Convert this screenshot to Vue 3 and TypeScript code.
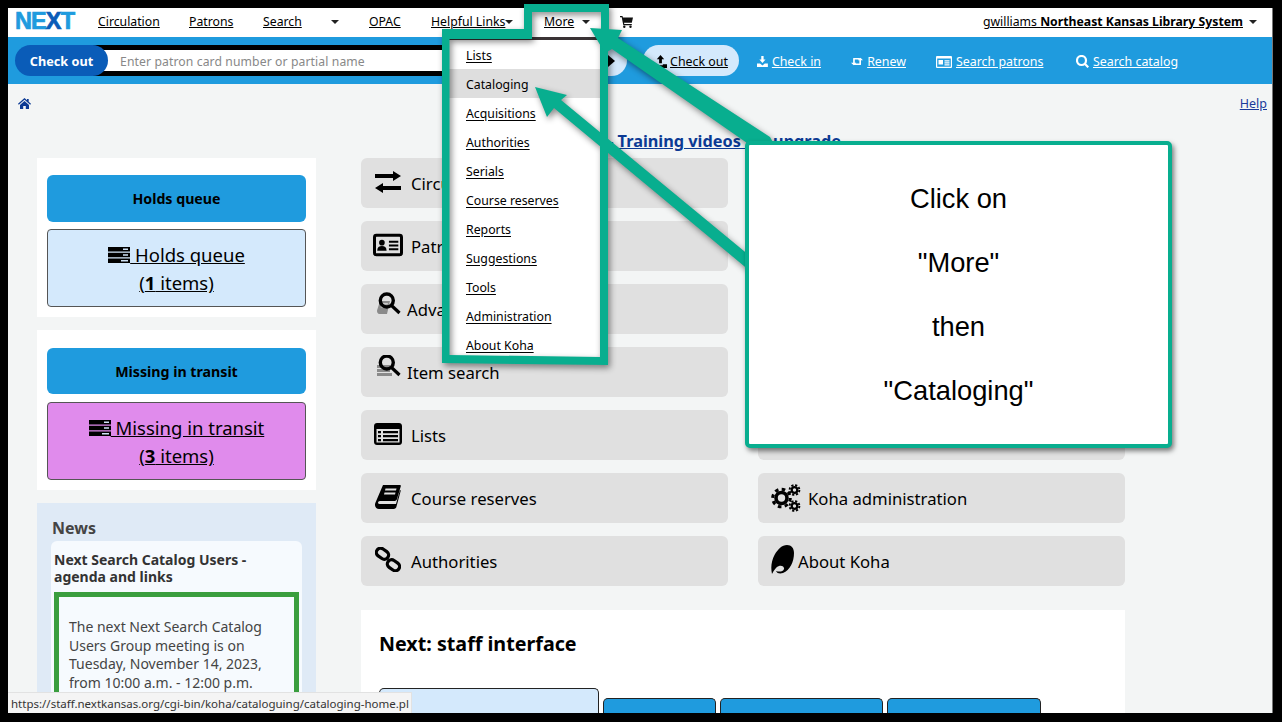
<script setup lang="ts">
const navLinks = [
  { label: 'Circulation', width: 61 },
  { label: 'Patrons', width: 44 },
  { label: 'Search', width: 39 },
]
const menuItems = ['Lists', 'Cataloging', 'Acquisitions', 'Authorities', 'Serials', 'Course reserves', 'Reports', 'Suggestions', 'Tools', 'Administration', 'About Koha']
const tools = [
  { label: 'Check in', icon: 'i-download', w: 64, iw: 13, ih: 13, gap: 30 },
  { label: 'Renew', icon: 'i-retweet', w: 55, iw: 15, ih: 11, gap: 30 },
  { label: 'Search patrons', icon: 'i-idcard', w: 108, iw: 16, ih: 12, gap: 32 },
  { label: 'Search catalog', icon: 'i-search', w: 104, iw: 13, ih: 13, gap: 0 },
]
const leftTiles = [
  { label: 'Circulation', icon: 'i-exchange', w: 28, h: 22 },
  { label: 'Patrons', icon: 'i-card', w: 32, h: 24 },
  { label: 'Advanced search', icon: 'i-advsearch', w: 24, h: 24, tight: true },
  { label: 'Item search', icon: 'i-itemsearch', w: 24, h: 24, tight: true },
  { label: 'Lists', icon: 'i-lists', w: 28, h: 22 },
  { label: 'Course reserves', icon: 'i-book', w: 26, h: 24 },
  { label: 'Authorities', icon: 'i-link', w: 26, h: 25 },
]
const panels = [
  { head: 'Holds queue', cls: 'blue', count: 1 },
  { head: 'Missing in transit', cls: 'pink', count: 3 },
]
const tabs = [
  { w: 220, active: true },
  { w: 113, active: false },
  { w: 163, active: false },
  { w: 154, active: false },
]
const calloutLines = ['Click on', '"More"', 'then', '"Cataloging"']
</script>

<template>
  <div class="frame">
    <svg class="defs" width="0" height="0" aria-hidden="true">
      <symbol id="i-exchange" viewBox="0 0 28 22"><path d="M1 3h18V0l8 5-8 5V7H1zM27 15H9v-3l-8 5 8 5v-3h18z" /></symbol>
      <symbol id="i-card" viewBox="0 0 32 24">
        <rect x="1.600" y="1.600" width="28.800" height="20.800" rx="2" fill="none" stroke="currentColor" stroke-width="3.200" />
        <circle cx="9.500" cy="9.500" r="3" /><path d="M4.500 18c0-3.500 2-5 5-5s5 1.500 5 5zM17 7.500h10v2H17zM17 11.500h10v2H17zM17 15.500h10v2H17z" />
      </symbol>
      <symbol id="i-advsearch" viewBox="0 0 24 24">
        <path d="M3 9h10l-3 13H2.500C0 22-.5 19 .5 17z" fill="#8a8a8a" />
        <path d="M5 11h6l-.4 1.500H4.600zM4 14h6l-.4 1.500H3.600z" fill="#c9c9c9" />
        <circle cx="9.800" cy="8.500" r="6.500" fill="none" stroke="currentColor" stroke-width="3.400" />
        <path d="M14.500 13.500l8 7.500" fill="none" stroke="currentColor" stroke-width="3.200" />
      </symbol>
      <symbol id="i-itemsearch" viewBox="0 0 24 24">
        <path d="M0 10h13v3H0zM0 14h13v3H0zM0 18h15v3H0z" fill="#8a8a8a" />
        <circle cx="9.800" cy="7.500" r="6.500" fill="none" stroke="currentColor" stroke-width="3.400" />
        <path d="M14.500 12.500l8 7.500" fill="none" stroke="currentColor" stroke-width="3.200" />
      </symbol>
      <symbol id="i-lists" viewBox="0 0 28 22">
        <path fill-rule="evenodd" d="M3 0h22c1.700 0 3 1.300 3 3v16c0 1.700-1.300 3-3 3H3c-1.700 0-3-1.300-3-3V3c0-1.700 1.300-3 3-3zM2.500 6v13.500h23V6z" />
        <path d="M4 8h3v2.200H4zM9 8h15v2.200H9zM4 12h3v2.200H4zM9 12h15v2.200H9zM4 16h3v2.200H4zM9 16h15v2.200H9z" />
      </symbol>
      <symbol id="i-book" viewBox="0 0 26 24">
        <path d="M8 0h17c.7 0 1 .5.8 1.200L22 14c-.5 1.600-1.500 2-3 2H5c-2 0-3 2.800-.5 3h16.500l4-14 .8.500-4.300 16c-.3 1.200-1.200 2.500-3 2.500H4C1 24-.8 21 .3 18z" />
        <path d="M10.500 3.500h11l-.5 2H10zM9.500 7.500h11l-.5 2H9z" fill="#dfdfdf" />
      </symbol>
      <symbol id="i-link" viewBox="0 0 26 25">
        <g fill="none" stroke="currentColor" stroke-width="3.200">
          <rect x="1" y="2.500" width="13" height="8.500" rx="4.200" transform="rotate(35 7.500 6.700)" />
          <rect x="12" y="14" width="13" height="8.500" rx="4.200" transform="rotate(35 18.500 18.200)" />
        </g>
      </symbol>
      <symbol id="i-gears" viewBox="0 0 30 28">
        <g fill="none" stroke="currentColor">
          <circle cx="10.500" cy="14" r="5.500" stroke-width="3.600" />
          <circle cx="10.500" cy="14" r="8.800" stroke-width="3" stroke-dasharray="3.600 3.300" />
          <circle cx="23.500" cy="6" r="2.800" stroke-width="2.200" />
          <circle cx="23.500" cy="6" r="4.900" stroke-width="1.900" stroke-dasharray="2.200 1.650" />
          <circle cx="23.500" cy="22" r="2.800" stroke-width="2.200" />
          <circle cx="23.500" cy="22" r="4.900" stroke-width="1.900" stroke-dasharray="2.200 1.650" />
        </g>
      </symbol>
      <symbol id="i-koha" viewBox="0 0 23 29">
        <path d="M16 0C20.500 0 23 3 23 8 23 17 19 25 12 28 9 29 6 28.500 5 26 8 27 12 27 13 24 13.500 22 11 20 8 21 5 22 3 25 1 29-.5 22 .5 16 3.500 10 7 4 11 0 16 0z" />
      </symbol>
      <symbol id="i-server" viewBox="0 0 22 16">
        <path d="M0 0h22v4.500H0zM0 5.800h22v4.500H0zM0 11.500h22V16H0z" />
        <path d="M15 1.500h5v1.500h-5zM15 7.300h5v1.500h-5zM13 13h7v1.500h-7z" fill="#cfe2f5" />
      </symbol>
      <symbol id="i-cart" viewBox="0 0 13 12">
        <path d="M0 0h2.500l.4 1.500H13l-1.200 5.300H4l.3 1.200h7.500v1.200H3.300L1.700 1.200H0z" />
        <circle cx="4.300" cy="10.800" r="1.200" /><circle cx="10.500" cy="10.800" r="1.200" />
      </symbol>
      <symbol id="i-home" viewBox="0 0 13 11">
        <path d="M6.500 0l2.500 2.200V1h1.700v2.700L13 5.800l-.8.900L6.500 1.700.8 6.700 0 5.800zM2 7l4.500-4L11 7v4H7.800V8H5.200v3H2z" />
      </symbol>
      <symbol id="i-upload" viewBox="0 0 14 14">
        <path d="M7 0l4 4.500H8.500V9h-3V4.500H3zM0 10h4.500v1h5v-1H14v4H0z" />
      </symbol>
      <symbol id="i-download" viewBox="0 0 14 14">
        <path d="M5.500 0h3v4.500H11L7 9 3 4.500h2.500zM0 9.500h4L7 12l3-2.500h4V14H0z" />
      </symbol>
      <symbol id="i-retweet" viewBox="0 0 16 11">
        <path d="M3 1h8.500v2H5v4h2L3.500 10.500 0 7h2.800V2.500C2.800 1.500 3 1 3 1zM13 10H4.500V8H11V4H9l3.500-3.500L16 4h-2.800v4.500c0 1-.2 1.500-.2 1.500z" />
      </symbol>
      <symbol id="i-idcard" viewBox="0 0 16 12">
        <path fill-rule="evenodd" d="M1 0h14a1 1 0 0 1 1 1v10a1 1 0 0 1-1 1H1a1 1 0 0 1-1-1V1a1 1 0 0 1 1-1zM1.200 2.500v8.300h13.600V2.500z" />
        <path d="M2.500 4h4.500v4.500H2.500zM8.500 4.200h5v1.200h-5zM8.500 6.200h5v1.200h-5zM8.500 8.200h5v1.200h-5z" />
      </symbol>
      <symbol id="i-search" viewBox="0 0 13 13">
        <path fill="none" stroke="currentColor" stroke-width="2.200" d="M5.500 1a4.500 4.500 0 1 1 0 9 4.500 4.500 0 0 1 0-9zM8.800 8.800L12.300 12.300" />
      </symbol>
    </svg>

    <div class="window">
      <header class="nav">
        <span class="logo"><span class="logo-a">NE</span><span class="logo-b">X</span><span class="logo-a">T</span></span>
        <a v-for="l in navLinks" :key="l.label" class="nav-link" :style="{ width: l.width + 'px' }">{{ l.label }}</a>
        <i class="caret caret-search"></i>
        <a class="nav-link opac">OPAC</a>
        <a class="nav-link helpful">Helpful Links</a>
        <i class="caret caret-help"></i>
        <a class="nav-link more">More </a>
        <i class="caret caret-more"></i>
        <svg class="cart" width="13" height="12"><use href="#i-cart" /></svg>
        <span class="user"><a class="user-link">gwilliams <b>Northeast Kansas Library System </b></a><i class="caret caret-user"></i></span>
      </header>

      <div class="toolbar">
        <div class="searchgroup">
          <span class="pill-label">Check out</span>
          <div class="fakeinput">Enter patron card number or partial name</div>
          <span class="go"><i></i></span>
        </div>
        <a class="tool-active"><svg width="13" height="13"><use href="#i-upload" /></svg> Check out</a>
        <a v-for="t in tools" :key="t.label" class="tool" :style="{ width: t.w + 'px', marginRight: t.gap + 'px' }">
          <svg :width="t.iw" :height="t.ih"><use :href="'#' + t.icon" /></svg><span class="tool-text"> {{ t.label }}</span>
        </a>
      </div>

      <div class="crumbs">
        <svg class="home" width="13" height="11"><use href="#i-home" /></svg>
        <a class="help">Help</a>
      </div>

      <div class="notice"><a>Get set for upgrade</a> - <a>Training videos for upgrade</a></div>

      <div class="columns">
        <aside class="left">
          <section v-for="p in panels" :key="p.head" class="panel" :class="p.cls">
            <div class="panel-head">{{ p.head }}</div>
            <div class="panel-box">
              <a class="panel-link"><svg width="22" height="16"><use href="#i-server" /></svg> {{ p.head }}</a>
              <a class="panel-count">(<b>{{ p.count }}</b> items)</a>
            </div>
          </section>
          <section class="news">
            <h3>News</h3>
            <div class="news-item">
              <h4>Next Search Catalog Users -<br />agenda and links</h4>
              <div class="news-body">The next Next Search Catalog Users Group meeting is on Tuesday, November 14, 2023, from 10:00 a.m. - 12:00 p.m.</div>
            </div>
          </section>
        </aside>

        <main class="main">
          <div class="tiles">
            <div class="tile-col">
              <a v-for="t in leftTiles" :key="t.label" class="tile" :class="{ tight: t.tight }">
                <span class="tile-icon"><svg :width="t.w" :height="t.h"><use :href="'#' + t.icon" /></svg></span>
                <span>{{ t.label }}</span>
              </a>
            </div>
            <div class="tile-col">
              <div v-for="n in 5" :key="n" class="tile"></div>
              <a class="tile gears"><svg width="30" height="28"><use href="#i-gears" /></svg><span>Koha administration</span></a>
              <a class="tile koha"><svg width="23" height="29"><use href="#i-koha" /></svg><span>About Koha</span></a>
            </div>
          </div>
          <section class="staff">
            <h2>Next: staff interface</h2>
            <div class="tabs">
              <div v-for="(t, i) in tabs" :key="i" class="tab" :class="{ active: t.active }" :style="{ width: t.w + 'px' }"></div>
            </div>
          </section>
        </main>
      </div>

      <nav class="menu">
        <a v-for="m in menuItems" :key="m" class="menu-item" :class="{ hover: m === 'Cataloging' }">{{ m }}</a>
      </nav>

      <div class="status">https://staff.nextkansas.org/cgi-bin/koha/cataloguing/cataloging-home.pl</div>
    </div>

    <svg class="overlay" width="1282" height="722" aria-hidden="true">
      <g class="shadow" fill="#08ae8f">
        <path fill-rule="evenodd" d="M524 4H609V42H608V365L442 363V29H524zM532 12V39H449.500V355L600 357V39H601V12z" />
        <path d="M590 28L622 30 618 38 770 137 775 146 750 146 747 143 612 49 605 53z" />
        <path d="M535 87L567 95 561 100 750 256V271L554 108 547 117z" />
      </g>
    </svg>

    <div class="callout">
      <p v-for="c in calloutLines" :key="c">{{ c }}</p>
    </div>
  </div>
</template>

<style>
html, body { margin: 0; background: #000; }
</style>

<style scoped>
.frame { position: relative; width: 1282px; height: 722px; padding: 8px 8px 9px; box-sizing: border-box; background: #000; overflow: hidden; font-family: "Noto Sans", "Open Sans", sans-serif; color: #000; }
.defs { position: absolute; }
svg { fill: currentColor; }
.window { position: relative; width: 1265px; height: 705px; overflow: hidden; background: #f3f5f5; border-right: 1px solid #777; box-sizing: border-box; }
a { color: inherit; text-decoration: underline; }

.nav { display: flex; align-items: center; height: 29px; background: #fff; font-size: 12.250px; padding: 0 0 2px 7px; box-sizing: border-box; }
.logo { width: 61px; margin-right: 22px; font-family: "Liberation Sans", sans-serif; font-weight: 700; font-size: 23.500px; letter-spacing: -.9px; line-height: 1; -webkit-text-stroke: .7px; }
.logo-a { color: #1f9bde; }
.logo-b { color: #0a5cb8; }
.nav-link { display: block; margin-right: 30px; white-space: nowrap; }
.caret { display: block; width: 0; height: 0; border: 4px solid transparent; border-top-color: #222; border-bottom-width: 0; }
.caret-search { margin: 0 30px 0 -1px; }
.opac { width: 32px; }
.helpful { width: 73px; margin-right: 1px; }
.caret-help { margin-right: 31px; }
.more { width: 33px; margin-right: 5px; }
.caret-more { margin-right: 30px; }
.cart { color: #111; }
.user { margin-left: auto; margin-right: 15px; display: flex; align-items: center; gap: 6px; white-space: nowrap; }

.toolbar { display: flex; align-items: center; height: 47px; background: #1f9bde; padding-left: 7px; font-size: 12.400px; color: #fff; }
.searchgroup { display: flex; align-items: stretch; width: 612px; height: 31px; margin-right: 16px; }
.pill-label { position: relative; z-index: 1; width: 93px; background: #0a5cb8; color: #fff; font-weight: 700; font-size: 12.700px; display: flex; align-items: center; justify-content: center; border-radius: 16px; flex: none; padding-top: 1px; box-sizing: border-box; }
.fakeinput { flex: 1; margin-left: -16px; padding: 1px 0 0 28px; background: #fff; border-top: 5px solid #000; border-bottom: 5px solid #000; color: #888; font-size: 12.200px; display: flex; align-items: center; letter-spacing: .1px; }
.go { width: 27px; flex: none; background: #d4e9fc; border-radius: 0 16px 16px 0; display: flex; align-items: center; padding-left: 8px; box-sizing: border-box; }
.go i { width: 0; height: 0; border: 6px solid transparent; border-left: 7px solid #000; border-right: 0; }
.tool-active { width: 96px; height: 31px; box-sizing: border-box; margin-right: 18px; padding-top: 1px; background: #d4e9fc; color: #000; border-radius: 16px; display: flex; align-items: center; justify-content: center; gap: 3px; white-space: nowrap; }
.tool { white-space: pre; display: flex; align-items: center; padding-top: 2px; height: 20px; box-sizing: border-box; }
.tool-text { margin-left: 4px; }

.crumbs { display: flex; justify-content: space-between; align-items: center; height: 38px; margin-bottom: 2px; padding: 0 5px 0 10px; font-size: 12.500px; }
.home { color: #0b3a94; }
.help { color: #1a3a9a; }
.notice { height: 34px; padding-left: 7px; text-align: center; font-size: 16.300px; font-weight: 700; color: #0b3a94; line-height: 34px; white-space: nowrap; }

.columns { display: flex; padding-left: 29px; gap: 45px; align-items: flex-start; }
.left { width: 279px; display: flex; flex-direction: column; gap: 13px; }
.panel { background: #fff; padding: 17px 10px 10px; display: flex; flex-direction: column; gap: 7px; }
.panel.pink { padding-top: 18px; gap: 8px; height: 160px; box-sizing: border-box; }
.pink .panel-head { height: 46px; }
.panel-head { height: 47px; background: #1f9bde; border-radius: 6px; display: flex; align-items: center; justify-content: center; font-weight: 700; font-size: 14.200px; }
.panel-box { height: 78px; box-sizing: border-box; padding-top: 2px; border: 1px solid #555; border-radius: 4px; display: flex; flex-direction: column; align-items: center; justify-content: center; font-size: 18.500px; line-height: 28px; }
.blue .panel-box { background: #d4e9fc; }
.pink .panel-box { background: #e08bec; }
.panel-link svg { vertical-align: -1px; }
.news { background: #dfeaf6; padding: 14px 14px 0; height: 210px; }
.news h3 { margin: 0 0 2px 1px; font-size: 16px; line-height: 22px; color: #444; font-weight: 700; }
.news-item { background: #f6fafe; border-radius: 6px; padding: 10px 3px 0; height: 200px; }
.news-item h4 { margin: 0 0 7px; font-size: 14px; line-height: 17px; color: #333; font-weight: 700; }
.news-body { border: 5px solid #3a9e3e; padding: 21px 10px; color: #444; font-size: 14px; line-height: 18.500px; }

.main { width: 764px; }
.tiles { display: flex; justify-content: space-between; }
.tile-col { width: 367px; display: flex; flex-direction: column; gap: 13px; }
.tile { height: 50px; background: #e0e0e0; border-radius: 6px; display: flex; align-items: center; padding-left: 12px; gap: 8px; font-size: 16.700px; text-decoration: none; }
.tile-icon { width: 30px; display: flex; justify-content: center; margin-top: -3px; flex: none; }
.tile.tight { gap: 4px; }
.tile.tight .tile-icon { margin-top: -10px; margin-left: 1px; margin-right: -1px; }
.gears { gap: 7px; padding-left: 13px; }
.koha { gap: 4px; padding-left: 13px; }
.koha svg { margin-top: -4px; }
.staff { margin-top: 24px; height: 200px; background: #fff; padding: 19px 18px; box-sizing: border-box; }
.staff h2 { margin: 0 0 29px; font-size: 19.700px; line-height: 30px; font-weight: 700; }
.tabs { display: flex; gap: 4px; align-items: flex-end; height: 40px; }
.tab { height: 30px; box-sizing: border-box; background: #1f9bde; border: 1px solid #222; border-bottom: 0; border-radius: 5px 5px 0 0; align-self: flex-start; margin-top: 10px; }
.tab.active { height: 40px; background: #d4e9fc; margin-top: 0; }

.menu { position: absolute; left: 441px; top: 29px; width: 151px; height: 320px; box-sizing: border-box; background: #fff; border-top: 3px solid #3a3335; z-index: 2; font-size: 12.300px; }
.menu-item { display: flex; align-items: center; height: 29px; padding: 1px 0 0 17px; box-sizing: border-box; text-underline-offset: 2px; }
.menu-item.hover { background: #dedede; text-decoration: none; }

.status { position: absolute; left: 0; bottom: 0; width: 404px; height: 21px; box-sizing: border-box; z-index: 3; background: #f4f4f4; border: 1px solid #e2e2e2; border-left: 0; border-bottom: 0; padding: 0 3px; font-size: 11.500px; line-height: 21px; color: #333; white-space: nowrap; }

.overlay { position: absolute; left: 0; top: 0; pointer-events: none; z-index: 4; }
.shadow { filter: drop-shadow(2px 3px 3px rgba(0, 0, 0, .45)); }
.callout { position: absolute; z-index: 5; left: 745px; top: 141px; width: 427px; height: 307px; box-sizing: border-box; background: #fff; border: 4px solid #08ae8f; border-radius: 5px; box-shadow: 2px 3px 5px rgba(0, 0, 0, .5); font-family: "Liberation Sans", Arial, sans-serif; font-size: 27.300px; text-align: center; padding-top: 22px; }
.callout p { margin: 0; height: 64px; line-height: 64px; }
</style>
